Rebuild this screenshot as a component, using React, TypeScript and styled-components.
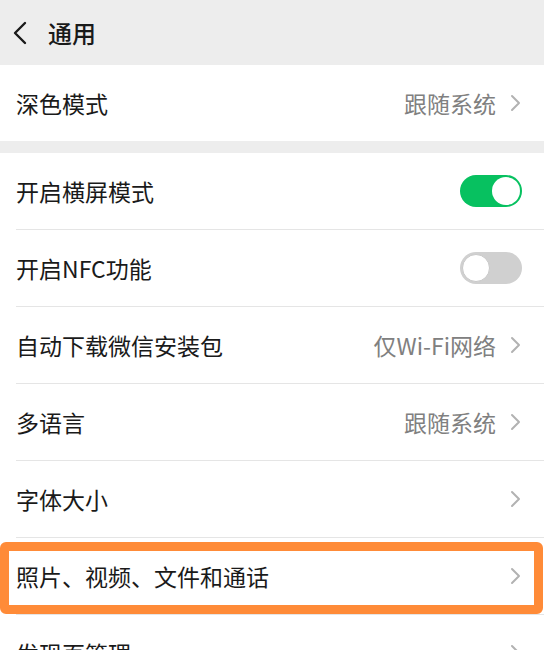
import styled, { createGlobalStyle } from "styled-components";

const GlobalStyle = createGlobalStyle`
  html, body {
    margin: 0;
    padding: 0;
    background: #ededed;
  }
  body {
    font-family: "Noto Sans CJK SC", "Noto Sans", sans-serif;
    -webkit-font-smoothing: antialiased;
  }
`;

type Item = {
  label: string;
  value?: string;
  toggle?: boolean;
  on?: boolean;
  highlight?: boolean;
};

const items: Item[] = [
  { label: "开启横屏模式", toggle: true, on: true },
  { label: "开启NFC功能", toggle: true, on: false },
  { label: "自动下载微信安装包", value: "仅Wi-Fi网络" },
  { label: "多语言", value: "跟随系统" },
  { label: "字体大小" },
  { label: "照片、视频、文件和通话", highlight: true },
  { label: "发现页管理" },
];

function Chevron() {
  return (
    <Arrow width="12" height="18" viewBox="0 0 12 18">
      <polyline
        points="2,2 9,9 2,16"
        fill="none"
        stroke="#b2b2b2"
        strokeWidth="2"
        strokeLinecap="round"
        strokeLinejoin="round"
      />
    </Arrow>
  );
}

function Row({ item }: { item: Item }) {
  return (
    <RowDiv>
      <Label>{item.label}</Label>
      <Right>
        {item.value && <Value>{item.value}</Value>}
        {item.toggle ? (
          <Switch $on={!!item.on}>
            <Knob $on={!!item.on} />
          </Switch>
        ) : (
          <Chevron />
        )}
      </Right>
      {item.highlight && <Highlight />}
    </RowDiv>
  );
}

export default function App() {
  return (
    <Page>
      <GlobalStyle />
      <Header>
        <svg width="14" height="24" viewBox="0 0 14 24">
          <polyline
            points="12,2 2,12 12,22"
            fill="none"
            stroke="#1a1a1a"
            strokeWidth="2.4"
            strokeLinecap="round"
            strokeLinejoin="round"
          />
        </svg>
        <Title>通用</Title>
      </Header>
      <Group>
        <Row item={{ label: "深色模式", value: "跟随系统" }} />
      </Group>
      <Group>
        {items.map((it) => (
          <Row key={it.label} item={it} />
        ))}
      </Group>
    </Page>
  );
}

const Page = styled.div`
  width: 544px;
  height: 650px;
  overflow: hidden;
  background: #ededed;
`;

const Header = styled.div`
  height: 65px;
  display: flex;
  align-items: center;
  gap: 21px;
  padding-left: 13px;
`;

const Title = styled.span`
  font-size: 24px;
  font-weight: 500;
  color: #1a1a1a;
`;

const Group = styled.div`
  background: #fff;
  padding-left: 16px;
  & + & {
    margin-top: 12px;
  }
`;

const RowDiv = styled.div`
  position: relative;
  height: 76px;
  display: flex;
  align-items: center;
  justify-content: space-between;
  padding-right: 22px;
  & + & {
    border-top: 1px solid #e5e5e5;
  }
`;

const Label = styled.span`
  font-size: 23px;
  color: #1a1a1a;
`;

const Right = styled.div`
  display: flex;
  align-items: center;
  gap: 14px;
`;

const Value = styled.span`
  font-size: 23px;
  color: #808080;
`;

const Arrow = styled.svg`
  display: block;
`;

const Switch = styled.div<{ $on: boolean }>`
  width: 62px;
  height: 32px;
  border-radius: 16px;
  box-sizing: border-box;
  padding: 2px;
  display: flex;
  justify-content: ${(p) => (p.$on ? "flex-end" : "flex-start")};
  background: ${(p) => (p.$on ? "#07c160" : "#d0d0d0")};
`;

const Knob = styled.div<{ $on: boolean }>`
  width: 28px;
  height: 28px;
  border-radius: 50%;
  background: #fff;
  box-sizing: border-box;
  border: ${(p) => (p.$on ? "none" : "1px solid #c8c8c8")};
`;

const Highlight = styled.div`
  position: absolute;
  top: 4px;
  bottom: 0;
  left: -16px;
  right: 1px;
  border: 9px solid #ff8b38;
  border-radius: 6px;
  pointer-events: none;
`;
